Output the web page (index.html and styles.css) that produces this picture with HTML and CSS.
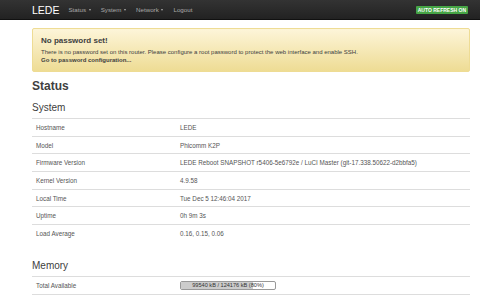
FILE: index.html
```html
<!DOCTYPE html>
<html>

<head>
    <title>LEDE - Overview</title>
    <link rel="stylesheet" href="styles.css">
</head>

<body>
    <div class="navbar">
        <div class="container nav-inner">
            <a class="brand" href="#">LEDE</a>
            <ul class="nav">
                <li>Status <span class="caret"></span></li>
                <li>System <span class="caret"></span></li>
                <li>Network <span class="caret"></span></li>
                <li>Logout</li>
            </ul>
            <span class="label-refresh">AUTO REFRESH ON</span>
        </div>
    </div>

    <div class="container main">
        <div class="alert">
            <h4>No password set!</h4>
            <p>There is no password set on this router. Please configure a root password to protect the web interface and enable SSH.</p>
            <a href="#">Go to password configuration...</a>
        </div>

        <h2>Status</h2>

        <div class="cbi-section">
            <h3>System</h3>
            <table class="cbi-table">
                <tr><td>Hostname</td><td>LEDE</td></tr>
                <tr><td>Model</td><td>Phicomm K2P</td></tr>
                <tr><td>Firmware Version</td><td>LEDE Reboot SNAPSHOT r5406-5e6792e / LuCI Master (git-17.338.50622-d2bbfa5)</td></tr>
                <tr><td>Kernel Version</td><td>4.9.58</td></tr>
                <tr><td>Local Time</td><td>Tue Dec 5 12:46:04 2017</td></tr>
                <tr><td>Uptime</td><td>0h 9m 3s</td></tr>
                <tr><td>Load Average</td><td>0.16, 0.15, 0.06</td></tr>
            </table>
        </div>

        <div class="cbi-section">
            <h3>Memory</h3>
            <table class="cbi-table">
                <tr>
                    <td>Total Available</td>
                    <td>
                        <div class="progress">
                            <div class="progress-bar" style="width: 77%"></div>
                            <span class="progress-text">99540 kB / 124176 kB (80%)</span>
                        </div>
                    </td>
                </tr>
            </table>
        </div>
    </div>
</body>

</html>
```

FILE: styles.css
```css
body {
    margin: 0;
    font-family: "Liberation Sans", Arial, sans-serif;
    font-size: 6.3px;
    color: #555;
    background-color: #fff;
}

.container {
    width: 438px;
    margin: 0 0 0 32px;
}

.navbar {
    height: 19px;
    background-color: #222;
    background-image: linear-gradient(to bottom, #333, #222);
    border-bottom: 1px solid #111;
}

.nav-inner {
    display: flex;
    align-items: center;
    height: 19px;
}

.brand {
    color: #fff;
    text-decoration: none;
    font-size: 10.5px;
    margin-right: 4px;
}

.nav {
    display: flex;
    list-style: none;
    margin: 0;
    padding: 0;
    flex: 1;
}

.nav>li {
    color: #aaa;
    font-size: 6.2px;
    padding: 0 5px;
}

.caret {
    display: inline-block;
    width: 0;
    height: 0;
    vertical-align: middle;
    border-top: 2px solid #aaa;
    border-left: 1.5px solid transparent;
    border-right: 1.5px solid transparent;
    margin-left: 1px;
}

.label-refresh {
    background-color: #46a546;
    color: #fff;
    font-weight: bold;
    font-size: 5px;
    padding: 1px 2px;
    margin-right: 2px;
    line-height: 6px;
    border-radius: 1px;
}

.main {
    padding-top: 8px;
}

.alert {
    background-color: #fceec1;
    background-image: linear-gradient(to bottom, #fdf5d9, #eedc94);
    border: 1px solid #eedc94;
    border-radius: 2px;
    padding: 7px 8px 4px;
    color: #404040;
    height: 31px;
}

.alert h4 {
    margin: 0 0 4px;
    font-size: 8px;
    font-weight: bold;
    color: #404040;
}

.alert p {
    margin: 0 0 1px;
    font-size: 6px;
}

.alert a {
    color: #404040;
    font-weight: bold;
    font-size: 6px;
    text-decoration: none;
}

h2 {
    font-size: 12px;
    margin: 6px 0 0;
    color: #404040;
    line-height: 16px;
}

.cbi-section h3 {
    font-size: 10px;
    font-weight: normal;
    color: #404040;
    margin: 7px 0 0;
    line-height: 14px;
}

.cbi-section+.cbi-section h3 {
    margin-top: 17px;
}

.cbi-table {
    width: 100%;
    border-collapse: collapse;
    margin-top: 3px;
}

.cbi-table td {
    border-top: 1px solid #ddd;
    padding: 0 4px;
    height: 16.7px;
    vertical-align: middle;
}

.cbi-table td:first-child {
    width: 136px;
}

.cbi-section+.cbi-section .cbi-table {
    border-bottom: 1px solid #ddd;
}

.progress {
    position: relative;
    width: 94px;
    height: 7px;
    border: 1px solid #999;
    border-radius: 2px;
    background-color: #fff;
    overflow: hidden;
}

.progress-bar {
    height: 100%;
    background-color: #ccc;
}

.progress-text {
    position: absolute;
    top: 0;
    left: 0;
    right: 0;
    text-align: center;
    font-size: 5.6px;
    line-height: 7px;
    color: #333;
}
```
